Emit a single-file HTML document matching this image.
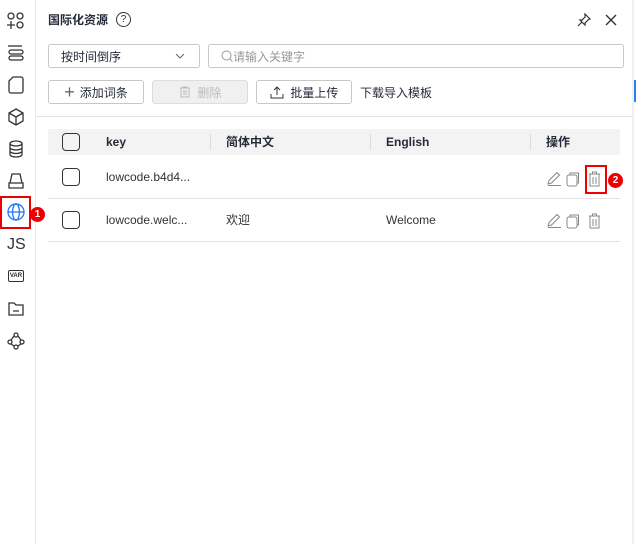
<!DOCTYPE html>
<html><head><meta charset="utf-8"><style>
*{box-sizing:border-box;margin:0;padding:0}
body{width:637px;height:544px;background:#fff;font-family:"Liberation Sans","Noto Sans CJK SC",sans-serif;font-size:12px;color:#252b3a;position:relative;overflow:hidden}
.a{position:absolute}
.side{left:0;top:0;width:36px;height:544px;border-right:1px solid #e8e8e8}
.ic{position:absolute;left:6px;width:20px;height:20px}
.btn{position:absolute;height:24px;border:1px solid #c7c7c7;border-radius:3px;display:flex;align-items:center;justify-content:center;font-size:12px;color:#252b3a}
.cb{position:absolute;width:18px;height:18px;border:1.5px solid #333;border-radius:4px;left:62px}
.t{position:absolute;font-size:12px;line-height:14px}
.sep{position:absolute;width:1px;height:16px;background:#ddd;top:134px}
.hl{position:absolute;left:48px;width:572px;height:1px;background:#e4e4e4}
</style></head><body>
<div class="a side">
<svg class="ic" style="top:11px" viewBox="0 0 20 20" fill="none" stroke="#333" stroke-width="1.3"><circle cx="5" cy="5" r="3"/><circle cx="14" cy="5" r="3"/><circle cx="14" cy="14" r="3"/><path d="M5 10v8M1 14h8"/></svg>
<svg class="ic" style="top:43px" viewBox="0 0 20 20" fill="none" stroke="#333" stroke-width="1.3"><path d="M2 3h14"/><rect x="3" y="7" width="14" height="4" rx="2"/><rect x="3" y="13" width="14" height="4" rx="2"/></svg>
<svg class="ic" style="top:75px" viewBox="0 0 20 20" fill="none" stroke="#333" stroke-width="1.3"><path d="M7 2h8a2 2 0 0 1 2 2v12a2 2 0 0 1-2 2H5a2 2 0 0 1-2-2V6z"/></svg>
<svg class="ic" style="top:107px" viewBox="0 0 20 20" fill="none" stroke="#333" stroke-width="1.3"><path d="M10 2l7 4v8l-7 4-7-4V6zM3 6l7 4 7-4M10 10v8"/></svg>
<svg class="ic" style="top:139px" viewBox="0 0 20 20" fill="none" stroke="#333" stroke-width="1.3"><ellipse cx="10" cy="4.5" rx="6" ry="2.5"/><path d="M4 4.5v11c0 1.4 2.7 2.5 6 2.5s6-1.1 6-2.5v-11M4 8.5c0 1.4 2.7 2.5 6 2.5s6-1.1 6-2.5M4 12c0 1.4 2.7 2.5 6 2.5s6-1.1 6-2.5"/></svg>
<svg class="ic" style="top:171px" viewBox="0 0 20 20" fill="none" stroke="#333" stroke-width="1.3"><path d="M6 3h8l2 9H4zM3 12h14v5H3z"/></svg>
<div class="a" style="left:0;top:196px;width:31px;height:33px;border:2px solid #e00"></div>
<svg class="ic" style="top:202px" viewBox="0 0 20 20" fill="none" stroke="#2f7cf6" stroke-width="1.4"><circle cx="10" cy="10" r="8"/><ellipse cx="10" cy="10" rx="3.5" ry="8"/><path d="M2 10h16"/></svg>
<div class="a" style="left:30px;top:207px;width:15px;height:15px;border-radius:50%;background:#e00;color:#fff;font-size:10px;font-weight:bold;text-align:center;line-height:15px">1</div>
<div class="a" style="left:7px;top:236px;font-size:16px;color:#333">JS</div>
<div class="a" style="left:8px;top:270px;width:16px;height:12px;border:1.3px solid #333;border-radius:2px;font-size:6px;font-weight:bold;text-align:center;line-height:10px">VAR</div>
<svg class="ic" style="top:299px" viewBox="0 0 20 20" fill="none" stroke="#333" stroke-width="1.3"><path d="M3 4h5l2 2h7v10H3zM7 12h6"/></svg>
<svg class="ic" style="top:331px" viewBox="0 0 20 20" fill="none" stroke="#333" stroke-width="1.3"><circle cx="10" cy="4" r="2"/><circle cx="4" cy="11" r="2"/><circle cx="16" cy="11" r="2"/><circle cx="10" cy="16" r="2"/><path d="M8 5l-3 4M12 5l3 4M5 13l3 2M15 13l-3 2"/></svg>
</div>
<div class="t" style="left:48px;top:13px;font-weight:bold;color:#252b3a">国际化资源</div>
<div class="a" style="left:116px;top:12px;width:15px;height:15px;border:1.2px solid #333;border-radius:50%;font-size:10px;text-align:center;line-height:13px">?</div>
<svg class="a" style="left:576px;top:12px" width="16" height="16" viewBox="0 0 16 16" fill="none" stroke="#333" stroke-width="1.2"><path d="M9 2l5 5-2 1-3 3 0 2-5-5 2 0 3-3zM6 10l-4 4"/></svg>
<svg class="a" style="left:604px;top:13px" width="14" height="14" viewBox="0 0 14 14" stroke="#333" stroke-width="1.4"><path d="M2 2l10 10M12 2L2 12"/></svg>
<div class="btn" style="left:48px;top:44px;width:152px;justify-content:space-between;padding:0 14px 0 12px"><span>按时间倒序</span><svg width="10" height="6" viewBox="0 0 10 6" fill="none" stroke="#666"><path d="M1 1l4 4 4-4"/></svg></div>
<div class="btn" style="left:208px;top:44px;width:416px;justify-content:flex-start;padding-left:12px;color:#999"><svg width="12" height="12" viewBox="0 0 12 12" fill="none" stroke="#999"><circle cx="5.5" cy="5.5" r="4.5"/><path d="M9 9l2.5 2.5"/></svg>请输入关键字</div>
<div class="btn" style="left:48px;top:80px;width:96px"><span style="font-size:18px;font-weight:300;margin-right:5px;color:#666">+</span>添加词条</div>
<div class="btn" style="left:152px;top:80px;width:96px;background:#f0f0f0;border-color:#ddd;color:#bbb"><svg width="12" height="12" viewBox="0 0 12 12" fill="none" stroke="#bbb"><path d="M1 2h10M4 2V1h4v1M2 2v9h8V2M5 4v5M7 4v5"/></svg>&nbsp;&nbsp;删除</div>
<div class="btn" style="left:256px;top:80px;width:96px"><svg width="14" height="14" viewBox="0 0 14 14" fill="none" stroke="#333"><path d="M7 10V2M4 5l3-3 3 3M1 9v4h12V9"/></svg>&nbsp;&nbsp;批量上传</div>
<div class="t" style="left:360px;top:86px">下载导入模板</div>
<div class="a" style="left:36px;top:116px;width:596px;height:1px;background:#e4e4e4"></div>
<div class="a" style="left:632px;top:0;width:2px;height:544px;background:#f0f0f0"></div>
<div class="a" style="left:634px;top:80px;width:2px;height:22px;background:#2f7cf6"></div>
<div class="a" style="left:48px;top:129px;width:572px;height:26px;background:#f3f3f3"></div>
<div class="cb" style="top:133px"></div>
<div class="t" style="left:106px;top:135px;font-weight:bold">key</div>
<div class="sep" style="left:210px"></div>
<div class="t" style="left:226px;top:135px;font-weight:bold">简体中文</div>
<div class="sep" style="left:370px"></div>
<div class="t" style="left:386px;top:135px;font-weight:bold">English</div>
<div class="sep" style="left:530px"></div>
<div class="t" style="left:546px;top:135px;font-weight:bold">操作</div>
<div class="cb" style="top:168px"></div>
<div class="t" style="left:106px;top:170px;color:#333">lowcode.b4d4...</div>
<div class="hl" style="top:198px"></div>
<div class="cb" style="top:211px"></div>
<div class="t" style="left:106px;top:213px;color:#333">lowcode.welc...</div>
<div class="t" style="left:226px;top:213px;color:#333">欢迎</div>
<div class="t" style="left:386px;top:213px;color:#333">Welcome</div>
<div class="hl" style="top:241px"></div>
<svg class="a" style="left:546px;top:170px" width="64" height="18" viewBox="0 0 64 18" fill="none" stroke="#888" stroke-width="1"><path d="M2 14l1-3.5 8-8 2.5 2.5-8 8zM2 15.5h13"/><rect x="21" y="5" width="10" height="11" rx="2"/><path d="M24 5V3h8.5v10H31"/><path d="M43 4h11M46.5 4V2h4v2M44 4v12h9V4M47 7v7M50 7v7"/></svg>
<svg class="a" style="left:546px;top:212px" width="64" height="18" viewBox="0 0 64 18" fill="none" stroke="#888" stroke-width="1"><path d="M2 14l1-3.5 8-8 2.5 2.5-8 8zM2 15.5h13"/><rect x="21" y="5" width="10" height="11" rx="2"/><path d="M24 5V3h8.5v10H31"/><path d="M43 4h11M46.5 4V2h4v2M44 4v12h9V4M47 7v7M50 7v7"/></svg>
<div class="a" style="left:585px;top:165px;width:22px;height:29px;border:2px solid #e00"></div>
<div class="a" style="left:608px;top:173px;width:15px;height:15px;border-radius:50%;background:#e00;color:#fff;font-size:10px;font-weight:bold;text-align:center;line-height:15px">2</div>
</body></html>
